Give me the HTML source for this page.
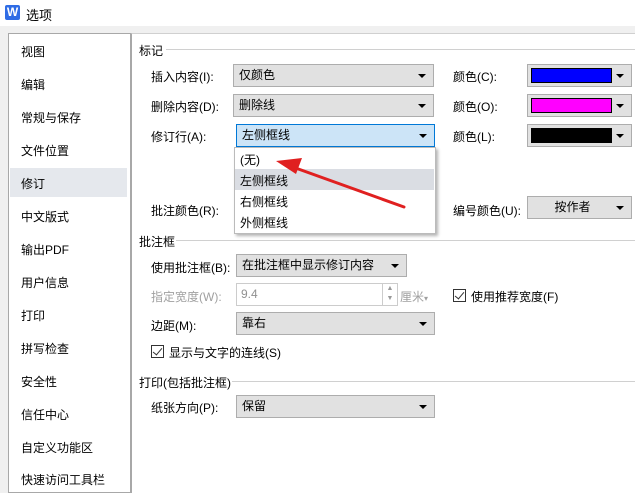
<!DOCTYPE html>
<html><head><meta charset="utf-8"><style>
*{margin:0;padding:0;box-sizing:border-box}
body{width:635px;height:486px;overflow:hidden;background:#f0f0f0;font-family:"Liberation Sans","Noto Sans CJK SC",sans-serif;font-size:12px;color:#000;position:relative}
.a{position:absolute;white-space:nowrap}
.t{margin-top:1px}
.title{left:0;top:0;width:635px;height:26px;background:#fff}
.side{left:8px;top:33px;width:123px;height:460px;background:#fff;border:1px solid #a8a8a8}
.main{left:131px;top:33px;width:510px;height:460px;background:#fff;border-left:1px solid #a8a8a8;border-top:1px solid #d0d0d0}
.si{left:21px}
.cb{background:#e1e1e1;border:1px solid #adadad;height:23px;padding-left:5px;line-height:21px}
.ar{position:absolute;right:7px;top:9px;width:0;height:0;border-left:4px solid transparent;border-right:4px solid transparent;border-top:4px solid #000}
.hl{height:1px;background:#d0d0d0}
.chk{width:13px;height:13px;border:1px solid #333;background:#fff}
.chk:after{content:"";position:absolute;left:3px;top:0px;width:4px;height:8px;border:solid #333;border-width:0 1.3px 1.3px 0;transform:rotate(40deg)}
</style></head><body>
<div class="a title"></div>
<div class="a" style="left:5px;top:5px;width:15px;height:15px;background:#2f6ce5;border-radius:2px;color:#fff;font-weight:bold;font-size:12px;line-height:15px;text-align:center">W</div>
<div class="a" style="left:26px;top:5px;font-size:13px">选项</div>
<div class="a side"></div>
<div class="a" style="left:10px;top:168px;width:117px;height:29px;background:#e5e8ed"></div>
<div class="a si" style="top:43px">视图</div>
<div class="a si" style="top:76px">编辑</div>
<div class="a si" style="top:109px">常规与保存</div>
<div class="a si" style="top:142px">文件位置</div>
<div class="a si" style="top:175px">修订</div>
<div class="a si" style="top:208px">中文版式</div>
<div class="a si" style="top:241px">输出PDF</div>
<div class="a si" style="top:274px">用户信息</div>
<div class="a si" style="top:307px">打印</div>
<div class="a si" style="top:340px">拼写检查</div>
<div class="a si" style="top:373px">安全性</div>
<div class="a si" style="top:406px">信任中心</div>
<div class="a si" style="top:439px">自定义功能区</div>
<div class="a si" style="top:471px">快速访问工具栏</div>
<div class="a main"></div>
<div class="a" style="left:139px;top:42px">标记</div>
<div class="a hl" style="left:166px;top:49px;width:469px"></div>
<div class="a" style="left:151px;top:68px">插入内容(I):</div>
<div class="a cb" style="left:233px;top:64px;width:201px">仅颜色<i class="ar"></i></div>
<div class="a" style="left:151px;top:98px">删除内容(D):</div>
<div class="a cb" style="left:233px;top:94px;width:201px">删除线<i class="ar"></i></div>
<div class="a" style="left:151px;top:128px">修订行(A):</div>
<div class="a cb" style="left:236px;top:124px;width:199px;background:#cce4f7;border-color:#0078d7">左侧框线<i class="ar"></i></div>
<div class="a" style="left:453px;top:68px">颜色(C):</div>
<div class="a" style="left:453px;top:98px">颜色(O):</div>
<div class="a" style="left:453px;top:128px">颜色(L):</div>
<div class="a cb" style="left:527px;top:64px;width:105px"><div class="a" style="left:3px;top:3px;width:81px;height:15px;background:#0000ff;border:1px solid #000"></div><i class="ar"></i></div>
<div class="a cb" style="left:527px;top:94px;width:105px"><div class="a" style="left:3px;top:3px;width:81px;height:15px;background:#ff00ff;border:1px solid #000"></div><i class="ar"></i></div>
<div class="a cb" style="left:527px;top:124px;width:105px"><div class="a" style="left:3px;top:3px;width:81px;height:15px;background:#000;border:1px solid #000"></div><i class="ar"></i></div>
<div class="a" style="left:151px;top:202px">批注颜色(R):</div>
<div class="a" style="left:453px;top:202px">编号颜色(U):</div>
<div class="a cb" style="left:527px;top:196px;width:105px;text-align:center;padding-left:0;padding-right:14px">按作者<i class="ar"></i></div>
<div class="a" style="left:234px;top:147px;width:202px;height:87px;background:#fff;border:1px solid #bbb;box-shadow:2px 2px 3px rgba(0,0,0,.3)"></div>
<div class="a" style="left:235px;top:169px;width:199px;height:21px;background:#dadde3"></div>
<div class="a" style="left:240px;top:151px">(无)</div>
<div class="a" style="left:240px;top:172px">左侧框线</div>
<div class="a" style="left:240px;top:193px">右侧框线</div>
<div class="a" style="left:240px;top:214px">外侧框线</div>
<svg class="a" style="left:0;top:0" width="635" height="486"><line x1="404" y1="207" x2="290" y2="166" stroke="#e02020" stroke-width="3" stroke-linecap="round"/><polygon points="276,161 302,158 296,174" fill="#e02020"/></svg>
<div class="a" style="left:139px;top:233px">批注框</div>
<div class="a hl" style="left:176px;top:240px;width:459px"></div>
<div class="a" style="left:151px;top:259px">使用批注框(B):</div>
<div class="a cb" style="left:236px;top:254px;width:171px">在批注框中显示修订内容<i class="ar"></i></div>
<div class="a" style="left:151px;top:288px;color:#a0a0a0">指定宽度(W):</div>
<div class="a" style="left:236px;top:283px;width:162px;height:23px;border:1px solid #ccc;background:#fff;color:#909090;padding-left:4px;line-height:21px">9.4</div>
<div class="a" style="left:382px;top:284px;width:15px;height:21px;border-left:1px solid #ccc;color:#999;font-size:7px;text-align:center;line-height:10px">▲<br>▼</div>
<div class="a" style="left:400px;top:288px;color:#a0a0a0">厘米<span style="font-size:8px">▾</span></div>
<div class="a chk" style="left:453px;top:289px"></div>
<div class="a" style="left:471px;top:288px">使用推荐宽度(F)</div>
<div class="a" style="left:151px;top:317px">边距(M):</div>
<div class="a cb" style="left:236px;top:312px;width:199px">靠右<i class="ar"></i></div>
<div class="a chk" style="left:151px;top:345px"></div>
<div class="a" style="left:169px;top:344px">显示与文字的连线(S)</div>
<div class="a" style="left:139px;top:374px">打印(包括批注框)</div>
<div class="a hl" style="left:232px;top:381px;width:403px"></div>
<div class="a" style="left:151px;top:399px">纸张方向(P):</div>
<div class="a cb" style="left:236px;top:395px;width:199px">保留<i class="ar"></i></div>
</body></html>
